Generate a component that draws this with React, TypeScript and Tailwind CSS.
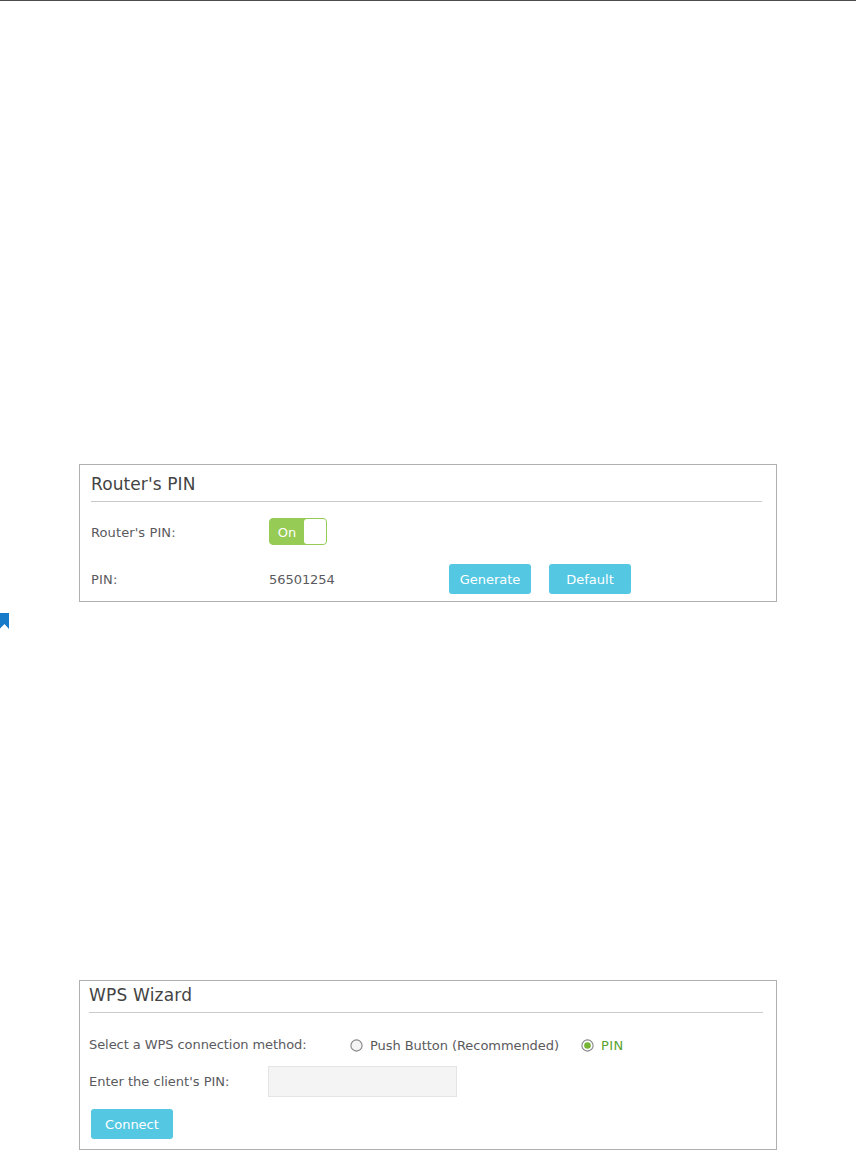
import { useState } from 'react';
import type { ReactNode } from 'react';
import clsx from 'clsx';

function Button({ children, className }: { children: ReactNode; className?: string }) {
  return (
    <button className={clsx('h-[30px] w-[82px] shrink-0 rounded-[3px] bg-[#54c7e2] pt-px text-[13px] leading-[30px] text-white', className)}>
      {children}
    </button>
  );
}

function Toggle({ on, onChange }: { on: boolean; onChange: () => void }) {
  return (
    <button
      onClick={onChange}
      className={clsx('flex h-[27px] w-[58px] rounded-[4px] border', on ? 'border-[#96cb55] bg-[#96cb55]' : 'flex-row-reverse border-gray-400 bg-gray-400')}
    >
      <span className="flex-1 pt-px text-center text-[13px] leading-[25px] text-white">{on ? 'On' : 'Off'}</span>
      <span className="h-full w-[22px] rounded-[3px] bg-white" />
    </button>
  );
}

function RadioDot({ checked }: { checked: boolean }) {
  return (
    <svg width="13" height="13" viewBox="0 0 13 13" className="shrink-0">
      <circle cx="6.5" cy="6.5" r="5.6" fill={checked ? '#fff' : '#f4f4f4'} stroke="#858585" strokeWidth="1.1" />
      {checked && <circle cx="6.5" cy="6.5" r="3.3" fill="#78b535" />}
    </svg>
  );
}

export default function App() {
  const [pinEnabled, setPinEnabled] = useState(true);
  const [method, setMethod] = useState<'push' | 'pin'>('pin');

  return (
    <div className="h-[1150px] w-[856px] overflow-hidden border-t border-[#4b4b4b] bg-white pt-[463px] font-['DejaVu_Sans',sans-serif] text-[13px] text-[#5a5a5e]">
      {/* Router's PIN */}
      <section className="ml-[79px] h-[138px] w-[698px] border border-[#b0b0b0] pr-[14px] pl-[11px]">
        <h2 className="h-[37px] border-b border-[#cacaca] pt-px text-[17px] leading-[37px] text-[#444]">
          <span className="tracking-[0.1px]">Router's PIN</span>
        </h2>
        <div className="mt-4 flex h-[27px] items-center">
          <span className="w-[178px] pt-[2px] tracking-[0.1px]">Router's PIN:</span>
          <Toggle on={pinEnabled} onChange={() => setPinEnabled(v => !v)} />
        </div>
        <div className="mt-[19px] flex h-[30px] items-center">
          <span className="w-[178px] pt-[2px] tracking-[0.2px]">PIN:</span>
          <span className="w-[180px] pt-[2px] tracking-[-0.05px]">56501254</span>
          <Button>Generate</Button>
          <Button className="ml-[18px]">Default</Button>
        </div>
      </section>

      {/* Bookmark at the page edge */}
      <div className="flex h-[378px] pt-[11px]">
        <svg width="9" height="16" viewBox="0 0 9 16">
          <path d="M0 0H9V16L4.5 11L0 15.5Z" fill="#187bca" />
        </svg>
      </div>

      {/* WPS Wizard */}
      <section className="ml-[79px] h-[170px] w-[698px] border border-[#b0b0b0] pr-[13px] pl-[9px]">
        <h2 className="h-[32px] border-b border-[#cacaca] text-[17px] leading-[28px] text-[#444]">
          <span className="tracking-[0.2px]">WPS Wizard</span>
        </h2>
        <div className="mt-[22px] flex h-[20px] items-center">
          <span className="w-[261px] tracking-[-0.07px] whitespace-nowrap">Select a WPS connection method:</span>
          <button onClick={() => setMethod('push')} className={clsx('flex items-center gap-[7px] whitespace-nowrap', method === 'push' && 'text-[#59a331]')}>
            <RadioDot checked={method === 'push'} />
            <span className="pt-[2px] tracking-[-0.06px]">Push Button (Recommended)</span>
          </button>
          <button onClick={() => setMethod('pin')} className={clsx('ml-[22px] flex items-center gap-[7px]', method === 'pin' && 'text-[#59a331]')}>
            <RadioDot checked={method === 'pin'} />
            <span className="pt-[2px] tracking-[0.4px]">PIN</span>
          </button>
        </div>
        <div className="mt-[11px] flex h-[31px] items-center">
          <span className="w-[179px] pt-px whitespace-nowrap">Enter the client's PIN:</span>
          <input aria-label="Client PIN" className="h-[31px] w-[189px] border border-[#e4e4e4] bg-[#f4f4f4] px-2" />
        </div>
        <Button className="mt-3 ml-[2px]">Connect</Button>
      </section>
    </div>
  );
}
